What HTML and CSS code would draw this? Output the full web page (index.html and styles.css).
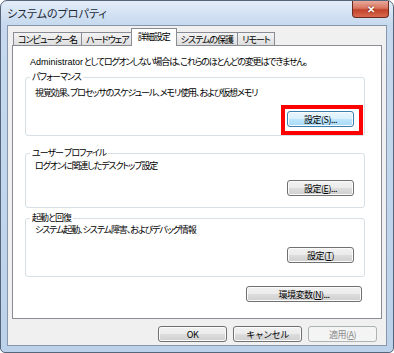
FILE: index.html
```html
<!DOCTYPE html>
<html lang="ja">
<head>
    <meta charset="UTF-8">
    <title>システムのプロパティ</title>
    <link rel="stylesheet" href="styles.css">
</head>
<body>
    <div class="window">
        <div class="titlebar">
            <span class="title">システムのプロパティ</span>
            <button class="close" type="button">✕</button>
        </div>
        <div class="client">
            <div class="tabs">
                <span class="tab">コンピューター名</span>
                <span class="tab">ハードウェア</span>
                <span class="tab active">詳細設定</span>
                <span class="tab">システムの保護</span>
                <span class="tab">リモート</span>
            </div>
            <div class="panel">
                <p class="note"><span class="latin">Administrator</span> としてログオンしない場合は、これらのほとんどの変更はできません。</p>

                <fieldset class="group group-perf">
                    <legend>パフォーマンス</legend>
                    <p>視覚効果、プロセッサのスケジュール、メモリ使用、および仮想メモリ</p>
                    <div class="row">
                        <span class="mark"><button class="btn focus" type="button">設定(S)...</button></span>
                    </div>
                </fieldset>

                <fieldset class="group group-profile">
                    <legend>ユーザー&nbsp;プロファイル</legend>
                    <p>ログオンに関連したデスクトップ設定</p>
                    <div class="row">
                        <button class="btn" type="button">設定(<u>E</u>)...</button>
                    </div>
                </fieldset>

                <fieldset class="group group-boot">
                    <legend>起動と回復</legend>
                    <p>システム起動、システム障害、およびデバッグ情報</p>
                    <div class="row">
                        <button class="btn" type="button">設定(<u>T</u>)</button>
                    </div>
                </fieldset>

                <div class="env">
                    <button class="btn wide" type="button">環境変数(<u>N</u>)...</button>
                </div>
            </div>
            <div class="footer">
                <button class="btn" type="button">OK</button>
                <button class="btn" type="button">キャンセル</button>
                <button class="btn" type="button" disabled>適用(<u>A</u>)</button>
            </div>
        </div>
    </div>
</body>
</html>
```

FILE: styles.css
```css
body {
    margin: 0;
    font-family: "Noto Sans CJK JP", "Noto Sans", sans-serif;
    font-size: 9px;
    font-feature-settings: "palt";
    letter-spacing: -1px;
    color: #000;
}
.window {
    width: 394px;
    height: 353px;
    box-sizing: border-box;
    display: flex;
    flex-direction: column;
    padding: 0 6px 6px;
    border: 1px solid #55657a;
    border-radius: 7px 7px 5px 5px;
    background: linear-gradient(#e3edf8, #c6d9ee 24px, #bcd2ea);
}
.titlebar {
    height: 24px;
    display: flex;
    justify-content: space-between;
    align-items: flex-start;
}
.title {
    margin: 5px 0 0 0;
    font-size: 11px;
    line-height: 14px;
    letter-spacing: 0;
    color: #1e2a38;
}
.close {
    width: 37px;
    height: 17px;
    margin-right: -2px;
    padding: 0;
    border: 1px solid #6b2a20;
    border-top: none;
    border-radius: 0 0 4px 4px;
    background: linear-gradient(#e9a99b, #d8755f 45%, #c2432b 55%, #d86a4f);
    color: #fff;
    font-size: 10px;
    font-weight: bold;
    line-height: 15px;
    letter-spacing: 0;
    text-shadow: 0 0 2px #5a1a10;
}
.client {
    flex: 1;
    display: flex;
    flex-direction: column;
    padding: 2px 4px 0;
    border: 1px solid #8796aa;
    background-color: #f0f0f0;
}

/* tabs */
.tabs {
    display: flex;
    align-items: flex-end;
    padding-left: 1px;
    margin-bottom: -1px;
}
.tab {
    height: 13px;
    padding: 0 4px;
    border: 1px solid #898c95;
    border-bottom: none;
    margin-right: -1px;
    background: linear-gradient(#f3f3f3, #e8e8e8 50%, #dcdcdc);
    line-height: 13px;
    white-space: nowrap;
}
.tab.active {
    position: relative;
    z-index: 1;
    height: 17px;
    margin: 0 -1px 0 -2px;
    padding: 0 6px;
    background: #fff;
    line-height: 16px;
}
.panel {
    height: 274px;
    box-sizing: border-box;
    padding: 10px 16px 0 12px;
    border: 1px solid #898c95;
    background-color: #fff;
}
.note {
    margin: 0 0 3px 5px;
    line-height: 12px;
    letter-spacing: -1.2px;
    white-space: nowrap;
}
.latin {
    font-family: "Liberation Sans", sans-serif;
    letter-spacing: 0;
}

/* group boxes */
.group {
    margin: 0;
    padding: 0 10px 10px 9px;
    border: 1px solid #d5dfe5;
    border-radius: 3px;
}
.group legend {
    margin-left: -5px;
    padding: 0 2px;
    line-height: 12px;
}
.group p {
    margin: 2px 0 0;
    line-height: 12px;
    letter-spacing: -1.1px;
    white-space: nowrap;
}
.group .row {
    display: flex;
    justify-content: flex-end;
    margin-top: 10px;
}
.group-perf {
    padding-bottom: 8px;
}
.group-perf p {
    margin-top: 4px;
}
.group-perf .row {
    margin-top: 12px;
}
.group-profile {
    margin-top: 11px;
    padding-bottom: 11px;
}
.group-profile p {
    margin-top: 1px;
}
.group-profile .row {
    margin-top: 8px;
}
.group-boot {
    margin-top: 4px;
    padding-bottom: 13px;
}
.group-boot p {
    margin-top: 0;
}
.group-boot .row {
    margin-top: 11px;
}
.env {
    display: flex;
    justify-content: flex-end;
    margin: 9px 3px 0 0;
}

/* buttons */
.btn {
    width: 67px;
    height: 16px;
    box-sizing: border-box;
    padding: 0;
    border: 1px solid #707070;
    border-radius: 3px;
    background: linear-gradient(#f2f2f2, #ebebeb 50%, #dddddd 51%, #cfcfcf);
    box-shadow: inset 0 0 0 1px #fbfbfb;
    font-family: inherit;
    font-size: 9px;
    line-height: 13px;
    letter-spacing: -0.5px;
    color: #000;
}
.btn.focus {
    border-color: #3c7fb1;
    background: linear-gradient(#eaf6fd, #d9f0fc 50%, #bee6fd 51%, #a7d9f5);
}
.btn.wide {
    width: 116px;
}
.btn:disabled {
    border-color: #adb2b5;
    background: #f4f4f4;
    box-shadow: none;
    color: #8a8a8a;
}
.mark {
    position: relative;
    display: flex;
}
.mark::after {
    content: "";
    position: absolute;
    left: -6px;
    top: -6px;
    right: -9px;
    bottom: -8px;
    border: 4px solid #f00;
}

.footer {
    display: flex;
    justify-content: flex-end;
    gap: 6px;
    margin-top: 7px;
    padding-right: 5px;
}
.footer .btn {
    width: 69px;
}
```
